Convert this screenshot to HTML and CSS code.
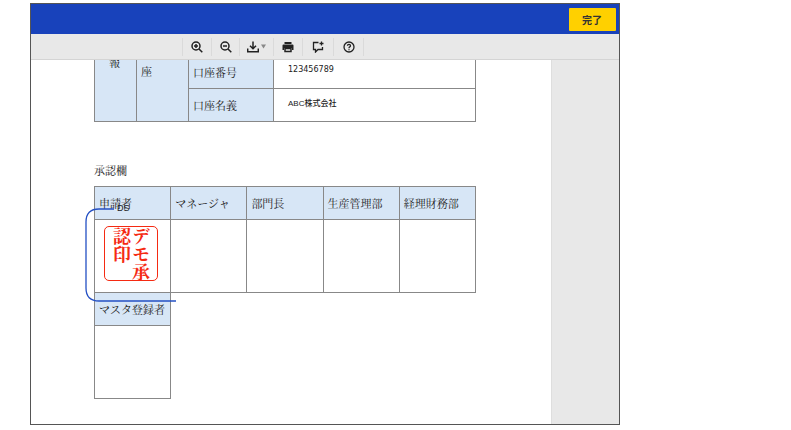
FILE: index.html
```html
<!DOCTYPE html>
<html lang="ja">
<head>
<meta charset="utf-8">
<title>承認</title>
<link rel="stylesheet" href="styles.css">
</head>
<body>
<div class="window">
  <header class="header"><button class="done" type="button">完了</button></header>
  <nav class="toolbar">
    <button class="tool" type="button" aria-label="拡大"><svg viewBox="0 0 12 12"><circle cx="5" cy="5" r="4"/><path d="M8 8l3.300 3.300M3 5h4M5 3v4"/></svg></button>
    <button class="tool" type="button" aria-label="縮小"><svg viewBox="0 0 12 12"><circle cx="5" cy="5" r="4"/><path d="M8 8l3.300 3.300M3 5h4"/></svg></button>
    <button class="tool" type="button" aria-label="ダウンロード"><svg viewBox="0 0 12 12"><path d="M6 0.500v7M3 4.800l3 3 3-3M0.700 7.500v3.300h10.600V7.500"/></svg><svg class="caret" viewBox="0 0 5 5"><path d="M0 0.500h5L2.500 4.500z"/></svg></button>
    <button class="tool" type="button" aria-label="印刷"><svg viewBox="0 0 12 12"><path class="solid" d="M2.500 1h7v2h-7zM1.500 3.500h9Q11.500 3.500 11.500 4.500V9H10V7H2v2H0.500V4.500Q0.500 3.500 1.500 3.500z"/><path d="M3 7.500h6v3H3z"/></svg></button>
    <button class="tool" type="button" aria-label="コメント"><svg class="thin" viewBox="0 0 12 12"><path d="M6.500 1.500H1.500v7H3.500v2.500L6 8.500h4.500V6M9.500 0.500v4M7.500 2.500h4"/></svg></button>
    <button class="tool" type="button" aria-label="ヘルプ"><svg class="thin" viewBox="0 0 12 12"><circle cx="6" cy="6" r="5"/><path d="M4.500 4.800Q4.500 3.300 6 3.300T7.500 4.700Q7.500 5.400 6.700 5.900 6 6.300 6 7.200M6 8.200v1.100"/></svg></button>
  </nav>
  <main class="viewer">
    <div class="page">
      <table class="sheet bank">
        <colgroup><col class="c-info"><col class="c-kind"><col class="c-name"><col></colgroup>
        <tr><th class="info" rowspan="2">報</th><th class="kind" rowspan="2">座</th><th>口座番号</th><td class="number">123456789</td></tr>
        <tr><th>口座名義</th><td class="owner">ABC株式会社</td></tr>
      </table>
      <h1 class="title">承認欄</h1>
      <table class="sheet approval">
        <tr><th>申請者</th><th>マネージャ</th><th>部門長</th><th>生産管理部</th><th>経理財務部</th></tr>
        <tr class="signs">
          <td class="signed">
            <div class="stamp">デモ承<br>認印</div>
            <svg class="bracket" viewBox="0 0 92 95"><path d="M29 1H14Q1 1 1 14V80Q1 93 14 93H91"/></svg>
            <span class="ds">DS</span>
          </td>
          <td></td><td></td><td></td><td></td>
        </tr>
        <tr><th>マスタ登録者</th></tr>
        <tr class="signs"><td></td></tr>
      </table>
    </div>
    <aside class="side"></aside>
  </main>
</div>
</body>
</html>
```
FILE: styles.css
```css
* { box-sizing: border-box; }

body {
  margin: 0;
  padding: 3px 171px 5px 30px;
  background: #fff;
  color: #222;
  font-family: "Liberation Sans", "Noto Sans CJK JP", sans-serif;
}

.window { border: 1px solid #555; }

.header {
  display: flex;
  justify-content: flex-end;
  align-items: center;
  height: 30px;
  padding: 0 3px;
  background: #1842bb;
}

.done {
  width: 47px;
  height: 23px;
  padding: 0 1px 0 0;
  border: 0;
  border-radius: 1px;
  background: #ffd000;
  color: #333;
  font: bold 10px "Noto Sans CJK JP", sans-serif;
}

.toolbar {
  display: flex;
  align-items: center;
  height: 26px;
  padding-left: 151px;
  border-bottom: 1px solid #d4d4d4;
  background: #e8e8e8;
}

.tool {
  display: flex;
  justify-content: center;
  align-items: center;
  gap: 2px;
  width: 31px;
  height: 18px;
  padding: 0;
  border: 0;
  border-left: 1px solid #dadada;
  background: none;
}

.tool:nth-child(1) { width: 29px; }
.tool:nth-child(2) { width: 28px; }
.tool:nth-child(3) { width: 34px; }
.tool:nth-child(4) { width: 29px; }
.tool:last-child { border-right: 1px solid #dadada; }

.tool svg {
  width: 12px;
  height: 12px;
  fill: none;
  stroke: #222;
  stroke-width: 1.5;
}

.tool .thin { stroke-width: 1.3; }
.tool .solid { fill: #222; stroke: none; }
.tool .caret { width: 5px; height: 5px; fill: #888; stroke: none; }

.viewer { display: flex; overflow: hidden; }

.page {
  flex: 1;
  padding: 0 75px 25px 63px;
}

.side {
  width: 68px;
  border-left: 1px solid #dedede;
  background: #e8e8e8;
}

.sheet {
  width: 100%;
  border-collapse: collapse;
  table-layout: fixed;
  font-family: "Noto Serif CJK JP", "Noto Sans CJK JP", serif;
  font-size: 11px;
  line-height: 12px;
}

.sheet th, .sheet td {
  height: 33px;
  padding: 0 4px;
  border: 1px solid #888;
  font-weight: 400;
  text-align: left;
  white-space: nowrap;
}

.sheet th { background: #d7e6f6; }

.bank { margin-top: -5px; }
.c-info { width: 42px; }
.c-kind { width: 52px; }
.c-name { width: 85px; }

.bank .info { padding: 0 0 0 14px; vertical-align: top; }
.bank .kind { padding-top: 9px; vertical-align: top; }

.bank td {
  padding: 0 14px;
  color: #222;
  font-family: "Liberation Sans", "Noto Sans CJK JP", sans-serif;
  font-size: 8px;
  font-weight: 500;
}

.bank .number { padding-bottom: 4px; font-family: "DejaVu Sans", sans-serif; }
.bank .owner { padding-bottom: 2px; }

.title {
  margin: 40px 0 8px;
  font: 400 11px/16px "Noto Serif CJK JP", "Noto Sans CJK JP", serif;
}

.sheet .signs td { height: 73px; }

.sheet .signed { position: relative; padding: 0 0 5px 9px; }

.stamp {
  width: 54px;
  height: 55px;
  padding: 0 7px;
  border: 1px solid #f52a12;
  border-radius: 5px;
  color: #f52a12;
  font-size: 18px;
  font-weight: 700;
  line-height: 19px;
  writing-mode: vertical-rl;
}

.bracket {
  position: absolute;
  top: -12px;
  left: -10px;
  width: 92px;
  height: 95px;
  fill: none;
  stroke: #2450c4;
  stroke-width: 1.3;
  z-index: 1;
}

.ds {
  position: absolute;
  top: -18px;
  left: 22px;
  font: 9px/12px "Liberation Sans", sans-serif;
}
```
